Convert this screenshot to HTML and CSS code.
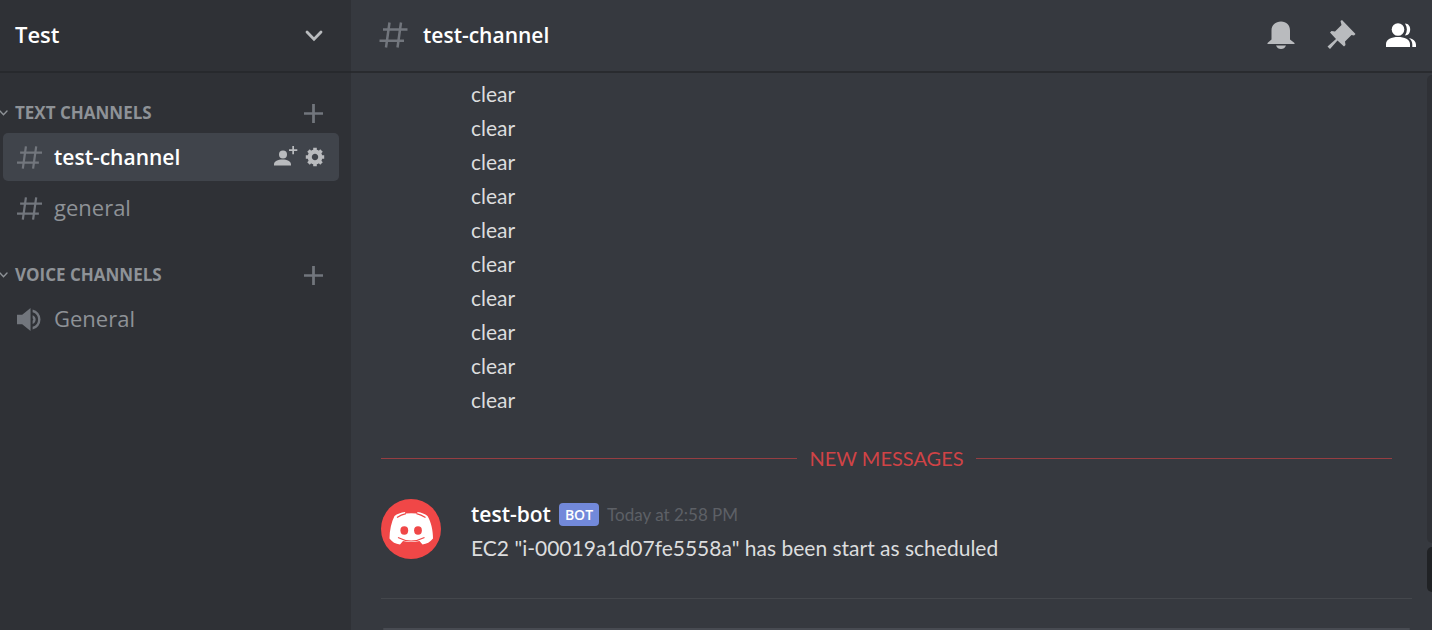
FILE: index.html
```html
<!DOCTYPE html>
<html lang="en">
<head>
<meta charset="utf-8">
<meta name="viewport" content="width=device-width, initial-scale=1">
<title>test-channel</title>
<link rel="stylesheet" href="styles.css">
</head>
<body>
<svg class="sprite" aria-hidden="true">
  <symbol id="hash" viewBox="0 0 28 28"><path d="M10 1.500 6.500 26.500M21.500 1.500 18 26.500M3.500 8.500H28M0 19.700H24.500" fill="none" stroke="currentColor" stroke-width="2.500"/></symbol>
  <symbol id="plus" viewBox="0 0 18 18"><path d="M9 0V18M0 9H18" fill="none" stroke="currentColor" stroke-width="2.600"/></symbol>
  <symbol id="chevron" viewBox="0 0 18 12"><path d="M2 2 9 9.300 16 2" fill="none" stroke="currentColor" stroke-width="2.800" stroke-linecap="round"/></symbol>
</svg>
<div class="app">
  <aside class="sidebar">
    <header class="guild">
      <h2 class="guild-name">Test</h2>
      <button class="icon-button" aria-label="Server menu"><svg class="guild-chevron"><use href="#chevron"/></svg></button>
    </header>
    <nav class="channels" aria-label="Channels">
      <section class="group">
        <div class="category">
          <svg class="category-chevron"><use href="#chevron"/></svg>
          <h3 class="category-name">TEXT CHANNELS</h3>
          <button class="icon-button add" aria-label="Create text channel"><svg class="plus"><use href="#plus"/></svg></button>
        </div>
        <div class="channel selected">
          <svg class="channel-icon"><use href="#hash"/></svg>
          <a class="channel-name" href="#test-channel">test-channel</a>
          <button class="icon-button" aria-label="Create invite">
            <svg class="invite" viewBox="0 0 24 22"><circle cx="9" cy="8.500" r="4" fill="currentColor"/><path d="M0 19.500V18.500C0 15 4 13.500 8.500 13.500S17 15 17 18.500V19.500ZM18.300 0H20V3.300H23.300V5H20V8.200H18.300V5H15V3.300H18.300Z" fill="currentColor"/></svg>
          </button>
          <button class="icon-button" aria-label="Edit channel">
            <svg class="gear" viewBox="-10 -10 20 20"><circle r="5.300" fill="none" stroke="currentColor" stroke-width="4.200"/><path d="M0-6.500V-9.200M0 6.500V9.200M-6.500 0H-9.200M6.500 0H9.200M4.600-4.600 6.500-6.500M-4.600 4.600-6.500 6.500M-4.600-4.600-6.500-6.500M4.600 4.600 6.500 6.500" fill="none" stroke="currentColor" stroke-width="3.600"/></svg>
          </button>
        </div>
        <div class="channel">
          <svg class="channel-icon"><use href="#hash"/></svg>
          <a class="channel-name" href="#general">general</a>
        </div>
      </section>
      <section class="group">
        <div class="category">
          <svg class="category-chevron"><use href="#chevron"/></svg>
          <h3 class="category-name">VOICE CHANNELS</h3>
          <button class="icon-button add" aria-label="Create voice channel"><svg class="plus"><use href="#plus"/></svg></button>
        </div>
        <div class="channel">
          <svg class="channel-icon" viewBox="0 0 24 24"><path d="M0 7.500H5L13 1V23L5 16.500H0Z" fill="currentColor"/><path d="M15 2.300A10 10 0 0 1 15 21.700V19A7.300 7.300 0 0 0 15 5ZM15 7.800A4.500 4.500 0 0 1 15 16.200V13.300A1.800 1.800 0 0 0 15 10.700Z" fill="currentColor"/></svg>
          <a class="channel-name" href="#voice-general">General</a>
        </div>
      </section>
    </nav>
  </aside>
  <main class="chat">
    <header class="toolbar">
      <svg class="toolbar-hash"><use href="#hash"/></svg>
      <h1 class="toolbar-title">test-channel</h1>
      <button class="icon-button" aria-label="Notifications">
        <svg class="toolbar-icon" viewBox="0 0 32 32"><path d="M2.500 25V24L6.500 20.500V11.500C6.500 6 10.500 2.500 16 2.500S25 6 25 11.500V20.500L29.500 24V25ZM11 26.500H21Q19.500 30 16 30T11 26.500Z" fill="currentColor"/></svg>
      </button>
      <button class="icon-button" aria-label="Pinned messages">
        <svg class="toolbar-icon" viewBox="0 0 32 32"><path d="M15.500 2 17 1 30.500 15 29 16.500 26.500 16 20 22.500 20.500 26 19 27.500 12.500 21.500 5 30 2.500 27.500 11 20 5 13.500 6.500 12 10 12.500 16.500 6Z" fill="currentColor"/></svg>
      </button>
      <button class="icon-button active" aria-label="Member list">
        <svg class="toolbar-icon" viewBox="0 0 32 32"><circle cx="13" cy="10.500" r="6.300" fill="currentColor"/><path d="M1 28V25C1 20.500 6.500 18 13 18S25 20.500 25 25V28ZM20 4.500C27 4.500 27 16.500 20 16.500C22.500 12.500 22.500 8.500 20 4.500ZM24 19C28.500 20 31 22.500 31 26V28H27.300V25.500C27.300 23 26.300 20.800 24 19Z" fill="currentColor"/></svg>
      </button>
    </header>
    <div class="body">
      <div class="column">
        <div class="messages">
          <div class="history">
            <p>clear</p><p>clear</p><p>clear</p><p>clear</p><p>clear</p>
            <p>clear</p><p>clear</p><p>clear</p><p>clear</p><p>clear</p>
          </div>
          <div class="divider">NEW MESSAGES</div>
          <article class="message">
            <svg class="avatar" viewBox="0 0 60 60" role="img" aria-label="test-bot avatar">
              <circle cx="30" cy="30" r="30" fill="#f04747"/>
              <path d="M13.500 17C16 15 20 13.500 24 13L24.500 14.500Q30 14 36 14.500L36.500 13C40.500 13.500 44 15 46.500 17C50 23 52 31 52 39.500C49.500 43 45.500 45 41.500 45.500L38.500 42Q30 44 22 42L19 45.500C14.500 45 11 43 8.500 39.500C8.500 31 10.500 23 13.500 17Z" fill="#fff"/>
              <path d="M16 18.500Q20 15.600 25 14.600M44.500 18.500Q40 15.600 35.500 14.600M17 38.500Q30 45.500 43.500 38.500" fill="none" stroke="#f04747" stroke-width="1.200"/>
              <ellipse cx="23.300" cy="31.500" rx="3.900" ry="4.200" fill="#f04747"/><ellipse cx="37" cy="31.500" rx="3.900" ry="4.200" fill="#f04747"/>
            </svg>
            <div class="message-content">
              <div class="byline"><strong class="author">test-bot</strong><span class="tag">BOT</span><time class="time">Today at 2:58 PM</time></div>
              <p>EC2 "i-00019a1d07fe5558a" has been start as scheduled</p>
            </div>
          </article>
        </div>
        <form class="composer"><input class="composer-input" type="text" aria-label="Message test-channel"></form>
      </div>
      <div class="scrollbar" aria-hidden="true"><div class="track"></div><div class="thumb"></div></div>
    </div>
  </main>
</div>
</body>
</html>
```
FILE: styles.css
```css
* { box-sizing: border-box; }
body {
  margin: 0;
  overflow: hidden;
  background: #36393f;
  color: #dcddde;
  font: 22px/34px "Open Sans", "Noto Sans", sans-serif;
}
h1, h2, h3, p { margin: 0; }
.sprite { position: absolute; width: 0; height: 0; }
svg { display: block; flex: none; }
.icon-button {
  display: flex;
  padding: 0;
  border: 0;
  background: none;
  color: #b9bbbe;
}
.app { display: flex; height: 100vh; }
.sidebar { flex: none; width: 351px; background: #2f3136; }
.guild {
  display: flex;
  align-items: center;
  justify-content: space-between;
  height: 73px;
  padding: 0 28px 0 15px;
  border-bottom: 2px solid #27292d;
}
.guild-name, .toolbar-title { color: #fff; font-size: 21px; font-weight: 600; }
.guild-name { padding-bottom: 3px; font-size: 22px; }
.guild-chevron { width: 18px; height: 12px; }
.channels { padding-top: 24px; }
.group { margin-bottom: 27px; }
.category { display: flex; align-items: center; height: 36px; padding: 0 28px 4px 0; color: #8e9297; }
.category-chevron { width: 9px; height: 6px; margin-left: -1px; margin-right: 7px; }
.category-name { flex: 1; font-size: 17px; font-weight: 700; line-height: 24px; }
.add { color: #72767d; }
.plus { width: 19px; height: 19px; }
.channel {
  display: flex;
  align-items: center;
  height: 48px;
  margin: 0 12px 3px 3px;
  padding: 0 14px;
  border-radius: 5px;
  color: #72767d;
}
.channel-icon { width: 25px; height: 25px; margin-right: 12px; }
.channel-name { flex: 1; padding-bottom: 2px; color: #8e9297; text-decoration: none; }
.selected { background: #40444b; }
.selected .channel-name { padding-bottom: 0; color: #fff; font-size: 21px; font-weight: 600; }
.invite { width: 24px; height: 22px; margin-right: 7px; }
.gear { width: 20px; height: 20px; }
.chat { flex: 1; min-width: 0; display: flex; flex-direction: column; }
.toolbar {
  display: flex;
  flex: none;
  align-items: center;
  gap: 28px;
  height: 73px;
  padding: 0 15px 2px 28px;
  border-bottom: 2px solid #292b2f;
}
.toolbar-hash { width: 29px; height: 28px; margin-right: -13px; color: #72767d; }
.toolbar-title { flex: 1; }
.toolbar-icon { width: 32px; height: 32px; }
.active { color: #fff; }
.body { display: flex; flex: 1; min-height: 0; }
.column { display: flex; flex-direction: column; flex: 1; min-width: 0; padding: 4px 15px 0 30px; }
.messages { flex: none; padding-right: 20px; font-family: Lato, "Open Sans", sans-serif; font-size: 21px; }
.history { padding-left: 90px; }
.divider {
  display: flex;
  align-items: center;
  gap: 12px;
  margin: 25px 0 24px;
  color: #d04346;
  font-size: 20px;
  line-height: 32px;
}
.divider::before, .divider::after { content: ""; flex: 1; height: 1px; background: #963e42; }
.message { display: flex; gap: 30px; padding-bottom: 33px; }
.avatar { width: 60px; height: 60px; margin-top: 1px; }
.byline { display: flex; align-items: center; gap: 8px; height: 33px; }
.author { padding-bottom: 1px; color: #fff; font: 600 21px/32px "Open Sans", sans-serif; }
.tag {
  padding: 0 6px;
  border-radius: 4px;
  background: #7289da;
  color: #fff;
  font: 600 14px/23px "Open Sans", sans-serif;
}
.time { color: #5d6066; font-size: 17px; }
.composer { display: flex; flex: 1; min-height: 0; padding: 29px 2px 0; border-top: 1px solid #44474c; }
.composer-input { flex: 1; height: 100%; max-height: 66px; padding: 0 15px; border: 0; border-radius: 8px; background: #484b52; color: #dcddde; font: inherit; }
.scrollbar { display: flex; flex-direction: column; gap: 4px; width: 5px; padding-top: 2px; }
.track { height: 468px; border-radius: 5px 0 0 5px; background: #2f3136; }
.thumb { height: 45px; border-radius: 5px 0 0 5px; background: #202225; }
```
